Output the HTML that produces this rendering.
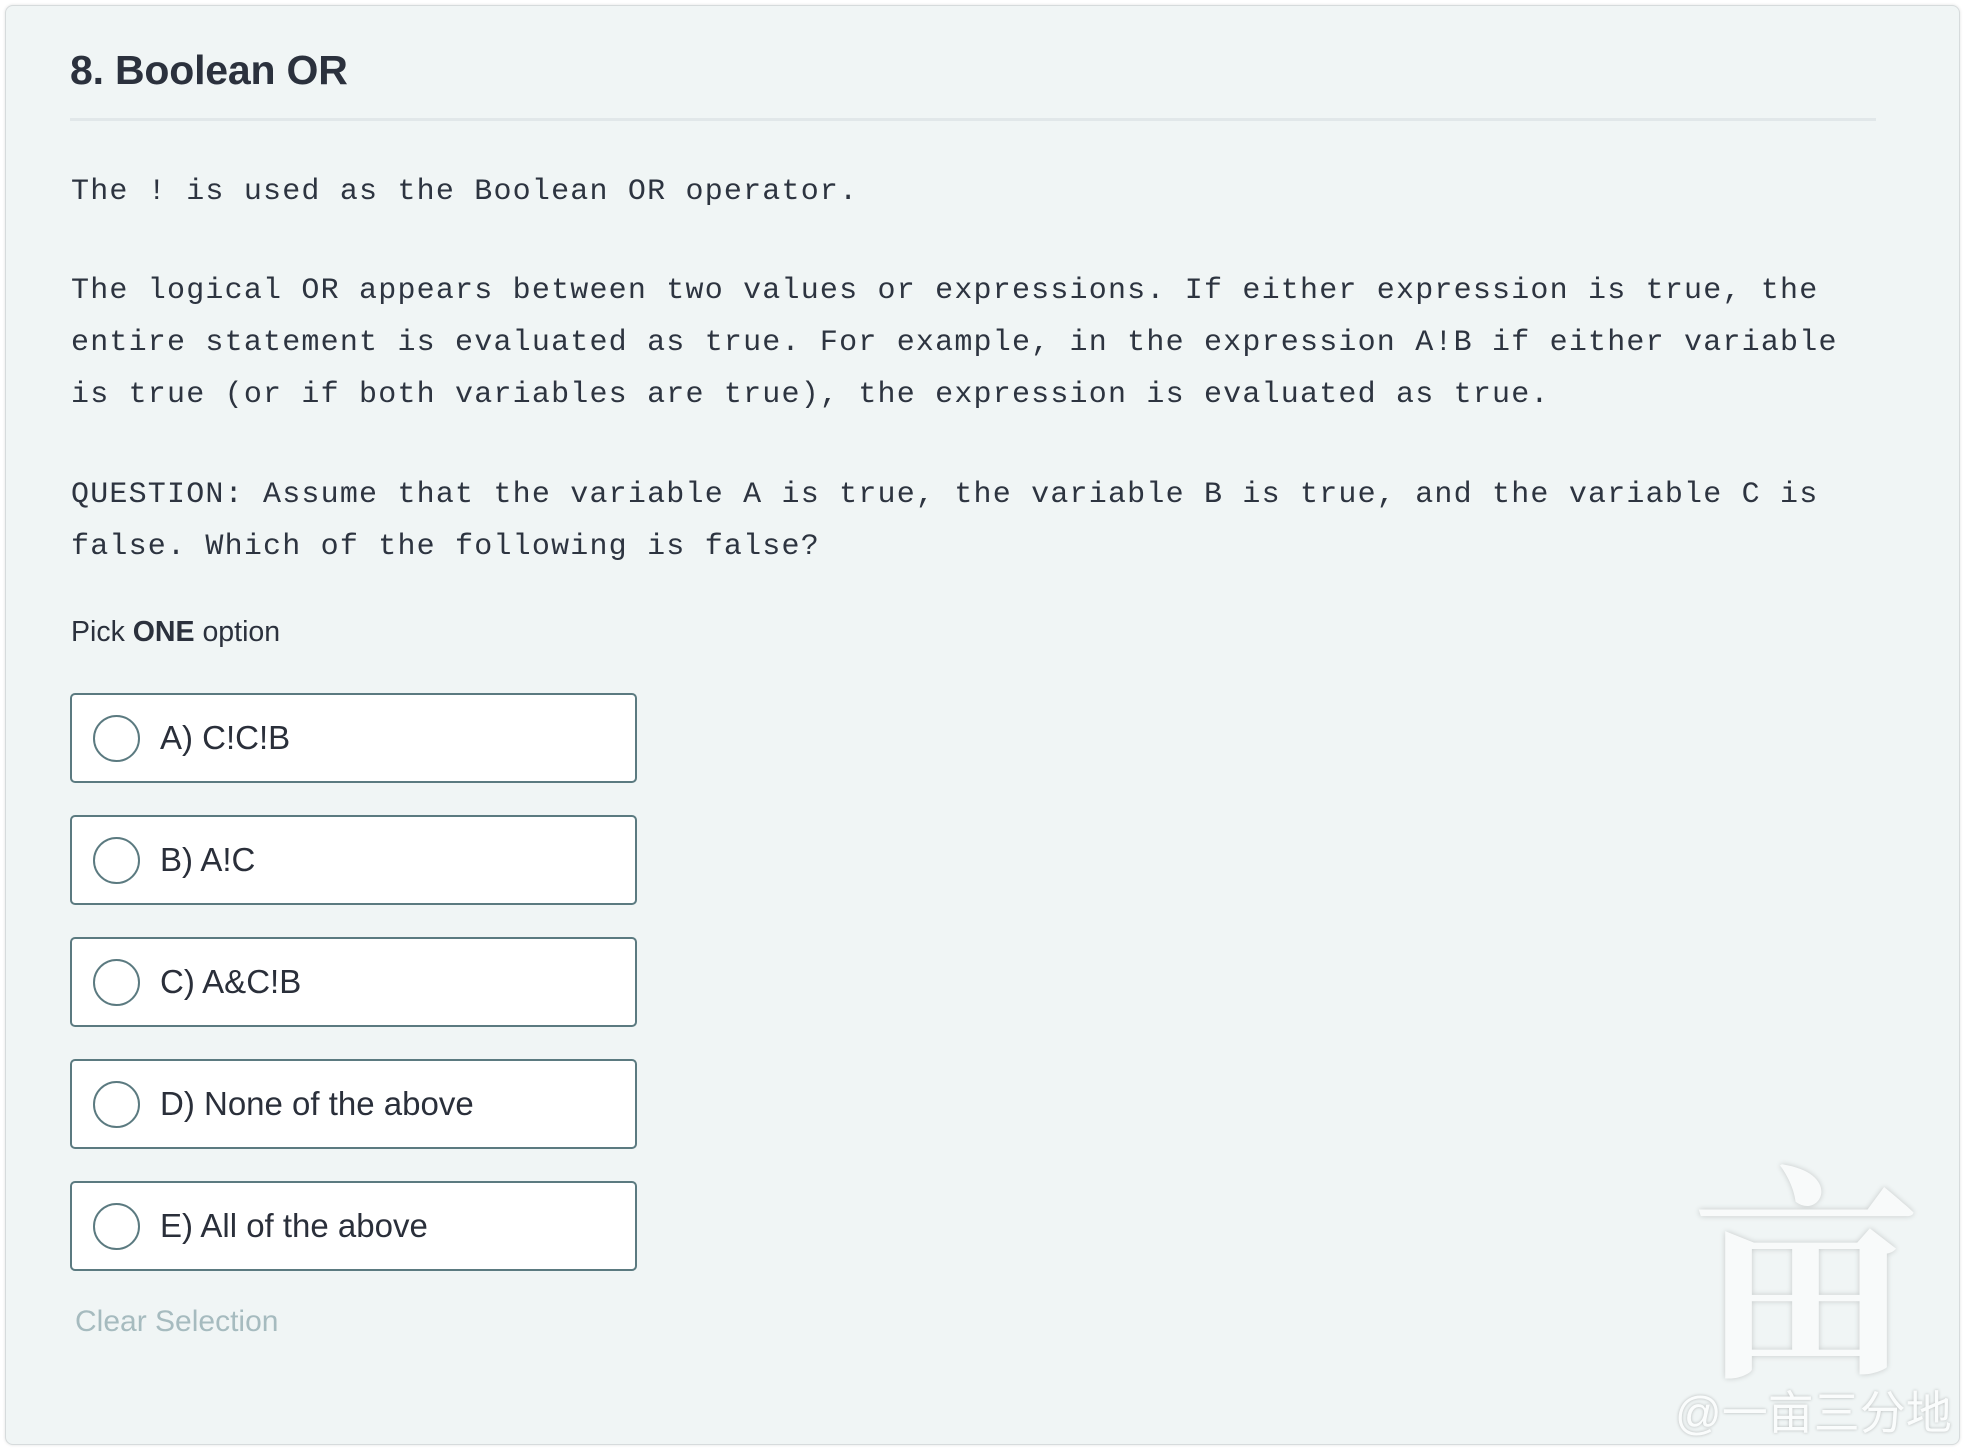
<!DOCTYPE html>
<html><head><meta charset="utf-8"><style>
html,body{margin:0;padding:0;}
body{width:1970px;height:1450px;background:#fff;position:relative;overflow:hidden;font-family:"Liberation Sans",sans-serif;}
.card{position:absolute;left:5px;top:5px;width:1953px;height:1438px;background:#f0f5f5;border:1px solid #d6dbdc;border-radius:8px;box-shadow:0 0 3px rgba(0,0,0,0.12);}
.h{position:absolute;left:70px;top:45px;font-size:41px;font-weight:bold;color:#2b313d;letter-spacing:-0.2px;line-height:50px;}
.div{position:absolute;left:70px;top:118px;width:1806px;height:3px;background:#e1e7e9;}
.mono{position:absolute;left:71px;font-family:"Liberation Mono",monospace;font-size:30px;letter-spacing:1.2px;color:#2d3440;white-space:pre;line-height:52px;}
.pick{position:absolute;left:71px;top:612px;font-size:28.5px;color:#2b313d;line-height:40px;}
.opt{position:absolute;left:70px;width:563px;height:86px;background:#fff;border:2px solid #5b7a80;border-radius:5px;}
.opt .r{position:absolute;left:21px;top:20px;width:43px;height:43px;border:2px solid #5b7a80;border-radius:50%;}
.opt .t{position:absolute;left:88px;top:23px;font-size:33px;color:#2a2f3a;line-height:40px;}
.clear{position:absolute;left:75px;top:1302px;font-size:30px;color:#a6bbbf;line-height:40px;}
.wm{position:absolute;left:1675px;top:1385px;font-family:"Liberation Sans","Noto Sans CJK SC",sans-serif;font-size:46px;color:#fafcfc;text-shadow:0 0 3px rgba(0,0,0,0.25);line-height:56px;}
.wm2{position:absolute;left:1690px;top:1140px;font-family:"Noto Serif CJK SC","Noto Sans CJK SC",serif;font-size:230px;font-weight:bold;color:#f8fafa;text-shadow:0 0 6px rgba(0,0,0,0.18);line-height:240px;}
</style></head><body>
<div class="card"></div>
<div class="h">8. Boolean OR</div>
<div class="div"></div>
<div class="mono" style="top:166px">The ! is used as the Boolean OR operator.</div>
<div class="mono" style="top:265px">The logical OR appears between two values or expressions. If either expression is true, the
entire statement is evaluated as true. For example, in the expression A!B if either variable
is true (or if both variables are true), the expression is evaluated as true.</div>
<div class="mono" style="top:469px">QUESTION: Assume that the variable A is true, the variable B is true, and the variable C is
false. Which of the following is false?</div>
<div class="pick">Pick <b>ONE</b> option</div>
<div class="opt" style="top:693px"><div class="r"></div><div class="t">A) C!C!B</div></div>
<div class="opt" style="top:815px"><div class="r"></div><div class="t">B) A!C</div></div>
<div class="opt" style="top:937px"><div class="r"></div><div class="t">C) A&amp;C!B</div></div>
<div class="opt" style="top:1059px"><div class="r"></div><div class="t">D) None of the above</div></div>
<div class="opt" style="top:1181px"><div class="r"></div><div class="t">E) All of the above</div></div>
<div class="clear">Clear Selection</div>
<div class="wm2">亩</div>
<div class="wm">@一亩三分地</div>
</body></html>
